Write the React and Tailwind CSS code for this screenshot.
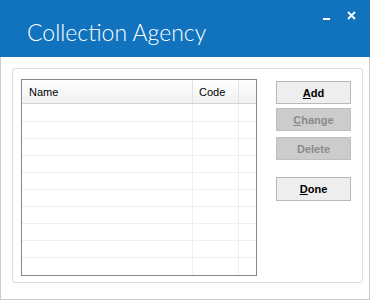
import React from "react";

const Btn = ({ children, disabled, className = "" }) => (
  <button
    className={
      "w-[75px] h-[23px] border text-[11px] font-bold flex items-center justify-center pt-px " +
      (disabled
        ? "bg-[#cccccc] border-[#bfbfbf] text-[#8a8a8a]"
        : "bg-[#eeeeee] border-[#b9b9b9] text-black") +
      " " +
      className
    }
  >
    {children}
  </button>
);

const Row = ({ last }) => (
  <div className={"flex h-[17px] shrink-0 " + (last ? "" : "border-b border-[#efefef]")}>
    <div className="w-[171px] border-r border-[#efefef]" />
    <div className="w-[46px] border-r border-[#efefef]" />
    <div className="flex-1" />
  </div>
);

export default function App() {
  const rows = [0, 1, 2, 3, 4, 5, 6, 7, 8, 9];
  return (
    <div
      className="w-[370px] h-[300px] flex flex-col bg-white"
      style={{ fontFamily: '"Liberation Sans", Arial, sans-serif' }}
    >
      <div className="h-[57px] shrink-0 bg-[#1172bd] relative">
        <span
          className="absolute left-[27px] top-[17px] text-[23px] leading-[30px] font-light text-white"
          style={{ fontFamily: 'Lato, "Open Sans", sans-serif' }}
        >
          Collection Agency
        </span>
        <div className="absolute left-[323px] top-[18px] w-[7px] h-[2px] bg-white" />
        <svg
          className="absolute left-[347px] top-[11px]"
          width="9"
          height="9"
          viewBox="0 0 9 9"
        >
          <path d="M1 1L8 8M8 1L1 8" stroke="white" strokeWidth="1.8" />
        </svg>
      </div>

      <div className="flex-1 border-x border-b border-[#cccccc] pt-[11px] pl-[11px]">
        <div className="w-[351px] h-[215px] border border-[#d5dfe5] rounded-[3px] flex pt-[10px] pl-[8px]">
          <div className="w-[236px] h-[197px] border border-[#828790] flex flex-col text-[11px] text-black">
            <div className="h-[24px] shrink-0 flex border-b border-[#d5d5d5] bg-linear-to-b from-white to-[#f0f1f2] mb-px">
              <div className="w-[171px] border-r border-[#e3e3e3] pl-[7px] pt-[2px] flex items-center">
                Name
              </div>
              <div className="w-[46px] border-r border-[#e3e3e3] pl-[6px] pt-[2px] flex items-center">
                Code
              </div>
              <div className="flex-1" />
            </div>
            {rows.map((r) => (
              <Row key={r} last={r === 9} />
            ))}
          </div>

          <div className="ml-[19px] mt-[2px] flex flex-col">
            <Btn>
              <span className="underline">A</span>dd
            </Btn>
            <Btn disabled className="mt-[4px]">
              <span className="underline">C</span>hange
            </Btn>
            <Btn disabled className="mt-[6px]">
              Delete
            </Btn>
            <Btn className="mt-[17px] h-[24px]">
              <span className="underline">D</span>one
            </Btn>
          </div>
        </div>
      </div>
    </div>
  );
}
